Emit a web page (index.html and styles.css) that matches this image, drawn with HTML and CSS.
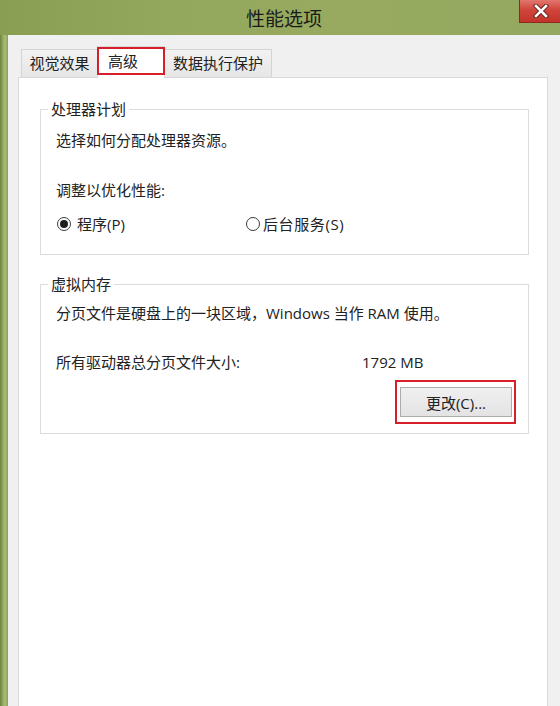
FILE: index.html
```html
<!DOCTYPE html>
<html lang="zh-CN">
<head>
<meta charset="utf-8">
<title>性能选项</title>
<link rel="stylesheet" href="styles.css">
</head>
<body>
<div class="window">
  <div class="titlebar">
    <span class="spacer"></span>
    <div class="title">性能选项</div>
    <div class="controls">
      <div class="close">
        <svg width="16" height="14" viewBox="0 0 16 14" aria-hidden="true">
          <path d="M3 2 L13 12 M13 2 L3 12" stroke="#5a1b16" stroke-width="4.4" stroke-linecap="square"/>
          <path d="M3 2 L13 12 M13 2 L3 12" stroke="#ffffff" stroke-width="2.6" stroke-linecap="square"/>
        </svg>
      </div>
    </div>
  </div>
  <div class="frame">
    <div class="edge"></div>
    <div class="body">
      <div class="tabs">
        <div class="tab t1">视觉效果</div>
        <div class="tab active">高级</div>
        <div class="tab t3">数据执行保护</div>
      </div>
      <div class="panel">
        <fieldset class="group g1">
          <legend>处理器计划</legend>
          <div class="inner">
            <p class="line first">选择如何分配处理器资源。</p>
            <p class="line gap30">调整以优化性能:</p>
            <div class="radios">
              <div class="radio r1"><span class="circle checked"></span><span>程序(P)</span></div>
              <div class="radio r2"><span class="circle"></span><span>后台服务(S)</span></div>
            </div>
          </div>
        </fieldset>
        <fieldset class="group g2">
          <legend>虚拟内存</legend>
          <div class="inner">
            <p class="line first2">分页文件是硬盘上的一块区域，Windows 当作 RAM 使用。</p>
            <div class="line gap29 sizerow"><span class="sizelabel">所有驱动器总分页文件大小:</span><span>1792 MB</span></div>
            <div class="btnrow">
              <div class="btnwrap"><button class="btn" type="button">更改(C)...</button></div>
            </div>
          </div>
        </fieldset>
      </div>
    </div>
  </div>
</div>
</body>
</html>
```
FILE: styles.css
```css
* { box-sizing: border-box; }
html, body { margin: 0; padding: 0; }
body {
  width: 560px;
  height: 706px;
  overflow: hidden;
  font-family: "Open Sans", "Noto Sans CJK SC", sans-serif;
  font-size: 15px;
  color: #222;
  background: #f0f0f0;
}
.window {
  width: 560px;
  height: 706px;
  display: flex;
  flex-direction: column;
}
.titlebar {
  height: 35px;
  flex: none;
  display: grid;
  grid-template-columns: 1fr auto 1fr;
  padding-left: 8px;
  background: linear-gradient(to right, #8a9e53 0%, #94a85d 30%, #97aa60 60%, #94a85f 100%);
}
.title {
  font-family: "Noto Sans CJK SC", sans-serif;
  font-size: 19px;
  line-height: 35px;
  color: #1a1a1a;
}
.controls {
  display: flex;
  justify-content: flex-end;
  align-items: flex-start;
}
.close {
  width: 41px;
  height: 23px;
  background: linear-gradient(to bottom, #e2776e 0%, #d0453b 45%, #c2342b 100%);
  border: 1px solid #8a2a22;
  border-top: none;
  border-right: none;
  display: flex;
  align-items: center;
  justify-content: center;
  padding-left: 2px;
}
.frame {
  flex: 1;
  display: flex;
  min-height: 0;
}
.edge {
  width: 8px;
  flex: none;
  background: linear-gradient(to right, #6b8240 0%, #9db267 45%, #a8bb74 70%, #86a051 100%);
}
.body {
  flex: 1;
  display: flex;
  flex-direction: column;
  padding: 0 12px 0 10px;
  background: #f0f0f0;
}
.tabs {
  margin-top: 11px;
  height: 31px;
  display: flex;
  align-items: flex-end;
  padding-left: 3px;
  position: relative;
  z-index: 1;
}
.tab {
  height: 28px;
  line-height: 26px;
  font-family: "Noto Sans CJK SC", sans-serif;
  font-size: 15px;
  color: #222;
  background: linear-gradient(to bottom, #f2f2f2, #e6e6e6);
  border: 1px solid #d4d4d4;
  border-bottom: none;
  text-align: center;
}
.t1 { width: 76px; border-right: none; }
.t3 { width: 107px; border-left: none; }
.tab.active {
  width: 68px;
  height: 32px;
  margin-bottom: -1px;
  background: #fff;
  border-color: #d9d9d9;
  text-align: left;
  padding-left: 10px;
  line-height: 28px;
  position: relative;
}
.tab.active::after {
  content: "";
  position: absolute;
  left: -1px;
  right: -1px;
  top: 0;
  bottom: 3px;
  border: 2px solid #d5202a;
}
.panel {
  flex: 1;
  background: #fff;
  border: 1px solid #d9d9d9;
  border-bottom: none;
  padding: 21px 18px 0 21px;
}
.group {
  margin: 0;
  padding: 0 16px 0 7px;
  border: 1px solid #dcdcdc;
  min-inline-size: 0;
}
.group legend {
  padding: 0 3px;
  line-height: 20px;
  font-family: "Noto Sans CJK SC", sans-serif;
  font-size: 15px;
  color: #222;
}
.inner {
  padding-left: 8px;
}
.line {
  margin: 0;
  line-height: 20px;
}
.first { margin-top: 11px; }
.first2 { margin-top: 9px; }
.gap30 { margin-top: 30px; }
.gap29 { margin-top: 29px; }
.g1 { padding-bottom: 20px; }
.g2 { margin-top: 19px; padding-bottom: 16px; }
.radios {
  margin-top: 14px;
  height: 20px;
  display: flex;
  align-items: center;
}
.radio {
  display: flex;
  align-items: center;
  line-height: 20px;
}
.r1 { width: 189px; }
.circle {
  width: 14px;
  height: 14px;
  border-radius: 50%;
  border: 1px solid #3c3c3c;
  background: #fff;
  margin-left: 1px;
  margin-right: 6px;
  display: flex;
  align-items: center;
  justify-content: center;
}
.circle.checked::before {
  content: "";
  width: 8px;
  height: 8px;
  border-radius: 50%;
  background: #1e1e1e;
}
.r2 .circle { margin-right: 3px; }
.r2 { letter-spacing: 0.6px; }
.sizerow { display: flex; }
.sizelabel { width: 306px; }
.btnrow {
  margin-top: 15px;
  display: flex;
  justify-content: flex-end;
}
.btnwrap { position: relative; }
.btnwrap::after {
  content: "";
  position: absolute;
  left: -5px;
  right: -4px;
  top: -7px;
  bottom: -7px;
  border: 2px solid #d5202a;
  pointer-events: none;
}
.btn {
  width: 112px;
  height: 30px;
  margin: 0;
  padding: 0;
  border: 1px solid #acacac;
  background: linear-gradient(to bottom, #f0f0f0, #e3e3e3);
  font-family: "Open Sans", "Noto Sans CJK SC", sans-serif;
  font-size: 15px;
  color: #222;
  text-align: center;
}
```
